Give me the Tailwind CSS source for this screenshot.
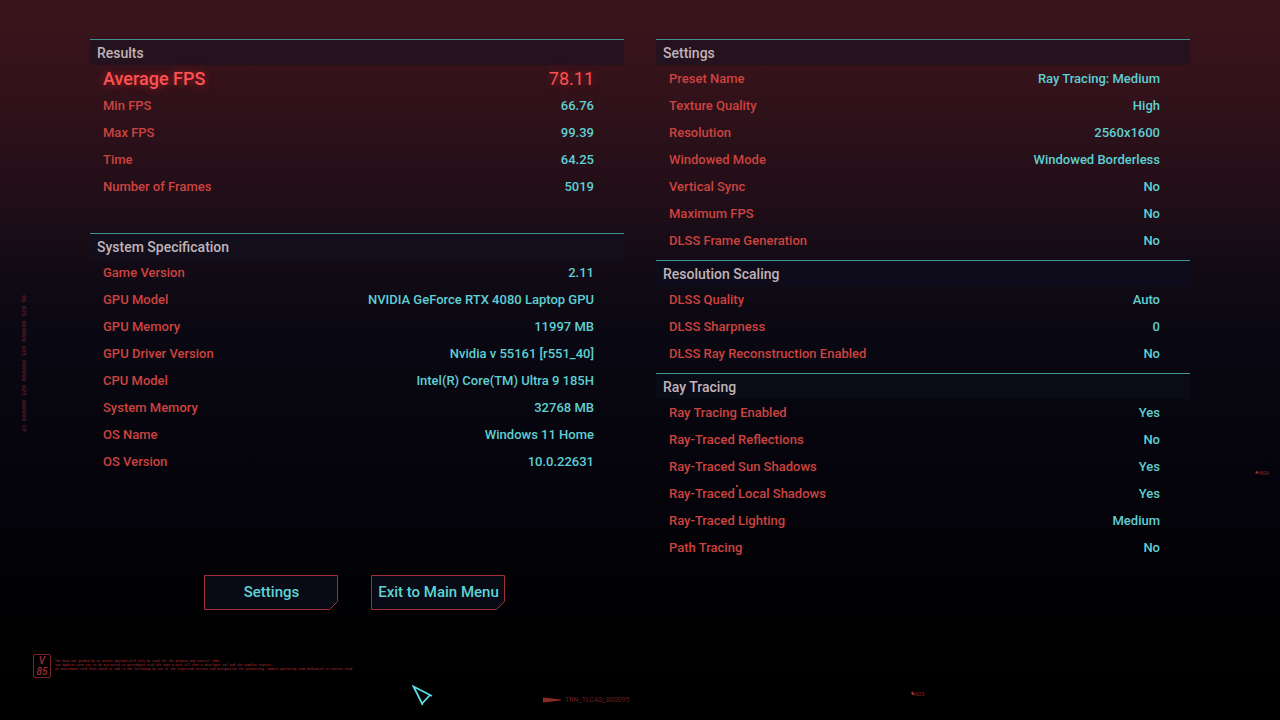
<!DOCTYPE html>
<html lang="en">
<head>
    <meta charset="UTF-8">
    <meta name="viewport" content="width=device-width, initial-scale=1.0">
    <title>Benchmark Results</title>
    <script src="https://cdn.jsdelivr.net/npm/@tailwindcss/browser@4"></script>
</head>
<body class="bg-black font-['Roboto',sans-serif]">
    <div class="relative min-h-screen flex flex-col overflow-hidden bg-[linear-gradient(to_bottom,#3a151b_0%,#33121a_12%,#200e18_28%,#130b15_36%,#0a0812_46%,#05040c_65%,#010103_85%,#000_100%)]">

        <!-- Result panels -->
        <main class="grid grid-cols-2 gap-8 px-[90px] pt-[39px]">
            <div class="flex flex-col gap-[33px]">
                <section>
                    <h2 class="h-[26px] pl-[7px] border-t border-[#3f9391] bg-[#25121f] text-sm leading-[26px] font-medium text-[#c0b4b8]">Results</h2>
                    <table class="w-full text-[13px] font-medium">
                        <tbody class="[&_tr]:h-[27px] [&_th]:p-0 [&_th]:pl-[13px] [&_th]:text-left [&_th]:font-medium [&_td]:p-0 [&_td]:pr-[30px] [&_td]:text-right [&_th]:text-[#cd433f] [&_td]:text-[#5fcfd3]">
                            <tr class="text-lg leading-[27px] text-[#ff5052] [&>*]:text-inherit! [&>td]:font-normal text-shadow-[0_0_8px_#ff303080]"><th scope="row">Average FPS</th><td>78.11</td></tr>
                            <tr><th scope="row">Min FPS</th><td>66.76</td></tr>
                            <tr><th scope="row">Max FPS</th><td>99.39</td></tr>
                            <tr><th scope="row">Time</th><td>64.25</td></tr>
                            <tr><th scope="row">Number of Frames</th><td>5019</td></tr>
                        </tbody>
                    </table>
                </section>

                <section>
                    <h2 class="h-[26px] pl-[7px] border-t border-[#3f9391] bg-[#120e1b] text-sm leading-[26px] font-medium text-[#c0b4b8]">System Specification</h2>
                    <table class="w-full text-[13px] font-medium">
                        <tbody class="[&_tr]:h-[27px] [&_th]:p-0 [&_th]:pl-[13px] [&_th]:text-left [&_th]:font-medium [&_td]:p-0 [&_td]:pr-[30px] [&_td]:text-right [&_th]:text-[#cd433f] [&_td]:text-[#5fcfd3]">
                            <tr><th scope="row">Game Version</th><td>2.11</td></tr>
                            <tr><th scope="row">GPU Model</th><td>NVIDIA GeForce RTX 4080 Laptop GPU</td></tr>
                            <tr><th scope="row">GPU Memory</th><td>11997 MB</td></tr>
                            <tr><th scope="row">GPU Driver Version</th><td>Nvidia v 55161 [r551_40]</td></tr>
                            <tr><th scope="row">CPU Model</th><td>Intel(R) Core(TM) Ultra 9 185H</td></tr>
                            <tr><th scope="row">System Memory</th><td>32768 MB</td></tr>
                            <tr><th scope="row">OS Name</th><td>Windows 11 Home</td></tr>
                            <tr><th scope="row">OS Version</th><td>10.0.22631</td></tr>
                        </tbody>
                    </table>
                </section>
            </div>

            <div class="flex flex-col gap-1.5">
                <section>
                    <h2 class="h-[26px] pl-[7px] border-t border-[#3f9391] bg-[#25121f] text-sm leading-[26px] font-medium text-[#c0b4b8]">Settings</h2>
                    <table class="w-full text-[13px] font-medium">
                        <tbody class="[&_tr]:h-[27px] [&_th]:p-0 [&_th]:pl-[13px] [&_th]:text-left [&_th]:font-medium [&_td]:p-0 [&_td]:pr-[30px] [&_td]:text-right [&_th]:text-[#cd433f] [&_td]:text-[#5fcfd3]">
                            <tr><th scope="row">Preset Name</th><td>Ray Tracing: Medium</td></tr>
                            <tr><th scope="row">Texture Quality</th><td>High</td></tr>
                            <tr><th scope="row">Resolution</th><td>2560x1600</td></tr>
                            <tr><th scope="row">Windowed Mode</th><td>Windowed Borderless</td></tr>
                            <tr><th scope="row">Vertical Sync</th><td>No</td></tr>
                            <tr><th scope="row">Maximum FPS</th><td>No</td></tr>
                            <tr><th scope="row">DLSS Frame Generation</th><td>No</td></tr>
                        </tbody>
                    </table>
                </section>

                <section>
                    <h2 class="h-[26px] pl-[7px] border-t border-[#3f9391] bg-[#0e0c1a] text-sm leading-[26px] font-medium text-[#c0b4b8]">Resolution Scaling</h2>
                    <table class="w-full text-[13px] font-medium">
                        <tbody class="[&_tr]:h-[27px] [&_th]:p-0 [&_th]:pl-[13px] [&_th]:text-left [&_th]:font-medium [&_td]:p-0 [&_td]:pr-[30px] [&_td]:text-right [&_th]:text-[#cd433f] [&_td]:text-[#5fcfd3]">
                            <tr><th scope="row">DLSS Quality</th><td>Auto</td></tr>
                            <tr><th scope="row">DLSS Sharpness</th><td>0</td></tr>
                            <tr><th scope="row">DLSS Ray Reconstruction Enabled</th><td>No</td></tr>
                        </tbody>
                    </table>
                </section>

                <section>
                    <h2 class="h-[26px] pl-[7px] border-t border-[#3f9391] bg-[#090b16] text-sm leading-[26px] font-medium text-[#c0b4b8]">Ray Tracing</h2>
                    <table class="w-full text-[13px] font-medium">
                        <tbody class="[&_tr]:h-[27px] [&_th]:p-0 [&_th]:pl-[13px] [&_th]:text-left [&_th]:font-medium [&_td]:p-0 [&_td]:pr-[30px] [&_td]:text-right [&_th]:text-[#cd433f] [&_td]:text-[#5fcfd3]">
                            <tr><th scope="row">Ray Tracing Enabled</th><td>Yes</td></tr>
                            <tr><th scope="row">Ray-Traced Reflections</th><td>No</td></tr>
                            <tr><th scope="row">Ray-Traced Sun Shadows</th><td>Yes</td></tr>
                            <tr><th scope="row">Ray-Traced Local Shadows</th><td>Yes</td></tr>
                            <tr><th scope="row">Ray-Traced Lighting</th><td>Medium</td></tr>
                            <tr><th scope="row">Path Tracing</th><td>No</td></tr>
                        </tbody>
                    </table>
                </section>
            </div>
        </main>

        <!-- Actions -->
        <div class="flex gap-8 pl-[204px] pt-3.5">
            <button type="button" class="relative w-[135px] h-[35px] text-[15px] font-medium text-[#5fd3d6] cursor-pointer">
                <svg class="absolute inset-0" width="135" height="35" viewBox="0 0 135 35" fill="#080a15" stroke="#a0303a"><path d="M.5.5h133v26l-8 8H.5z"/></svg>
                <span class="relative">Settings</span>
            </button>
            <button type="button" class="relative w-[135px] h-[35px] text-[15px] font-medium whitespace-nowrap text-[#5fd3d6] cursor-pointer">
                <svg class="absolute inset-0" width="135" height="35" viewBox="0 0 135 35" fill="#080a15" stroke="#a0303a"><path d="M.5.5h133v26l-8 8H.5z"/></svg>
                <span class="relative">Exit to Main Menu</span>
            </button>
        </div>

        <!-- Fine print -->
        <footer class="flex items-center gap-1 pl-[33px] pt-11 pb-10 text-[#8a2226]">
            <div class="w-[18px] h-6 rounded-xs border border-[#7a2328] text-center text-[10px] leading-[11px] font-medium italic text-[#9a2e30]">V<br>85</div>
            <p class="text-[3px] leading-[4px] font-bold font-['Liberation_Mono',monospace] whitespace-nowrap">
                The data was guided by an unseen payload with only be used for the purpose and control them.<br>
                Two updates were set to be activated in accordance with the code R-Unit all then a developer cal and the complex request.<br>
                In accordance with both check or add to the following by one of the requested service and designation for processing. Remote operating team dedicated to content used.
            </p>
        </footer>

        <!-- HUD marks -->
        <div class="absolute left-5 top-[295px] text-[6px] leading-[7px] font-bold font-['Liberation_Mono',monospace] text-[#5c1a22] [writing-mode:vertical-rl] whitespace-nowrap">06 025 000000 025 000000 025 000000 CP</div>
        <div class="absolute left-[543px] top-[695px] flex items-center gap-1 text-[7px] leading-[10px] text-[#6c1e1f]">
            <svg width="18" height="6" viewBox="0 0 18 6" fill="#8a2a26"><path d="M0 .5 18 2.5v1L0 5.5z"/></svg>
            TRN_TLCAS_800095
        </div>
        <div class="absolute left-[911px] top-[690px] flex items-center text-[5px] leading-[8px] text-[#8a2226]">
            <svg width="4" height="6" viewBox="0 0 4 6" fill="#b03034"><path d="M0 1.5 2 .5l2 4-3-1z"/></svg>N25
        </div>
        <div class="absolute right-[11px] top-[469px] flex items-center text-[5px] leading-[8px] text-[#8a2226]">
            <svg width="4" height="6" viewBox="0 0 4 6" fill="#b03034"><path d="M0 3.5 2 .5l2 3z"/></svg>N0A
        </div>
        <div class="absolute left-[736px] top-[485px] size-0.5 bg-[#c23a38]"></div>

        <!-- Pointer -->
        <svg class="absolute left-[411px] top-[685px]" width="24" height="24" viewBox="0 0 24 24" fill="none" stroke="#5fe0ea" stroke-width="1.7"><path d="M2.500 1.500 11 18.500l8-8.500zM11 17.500l.5 2.500M18 9.500l3 1.500"/></svg>
    </div>
</body>
</html>
